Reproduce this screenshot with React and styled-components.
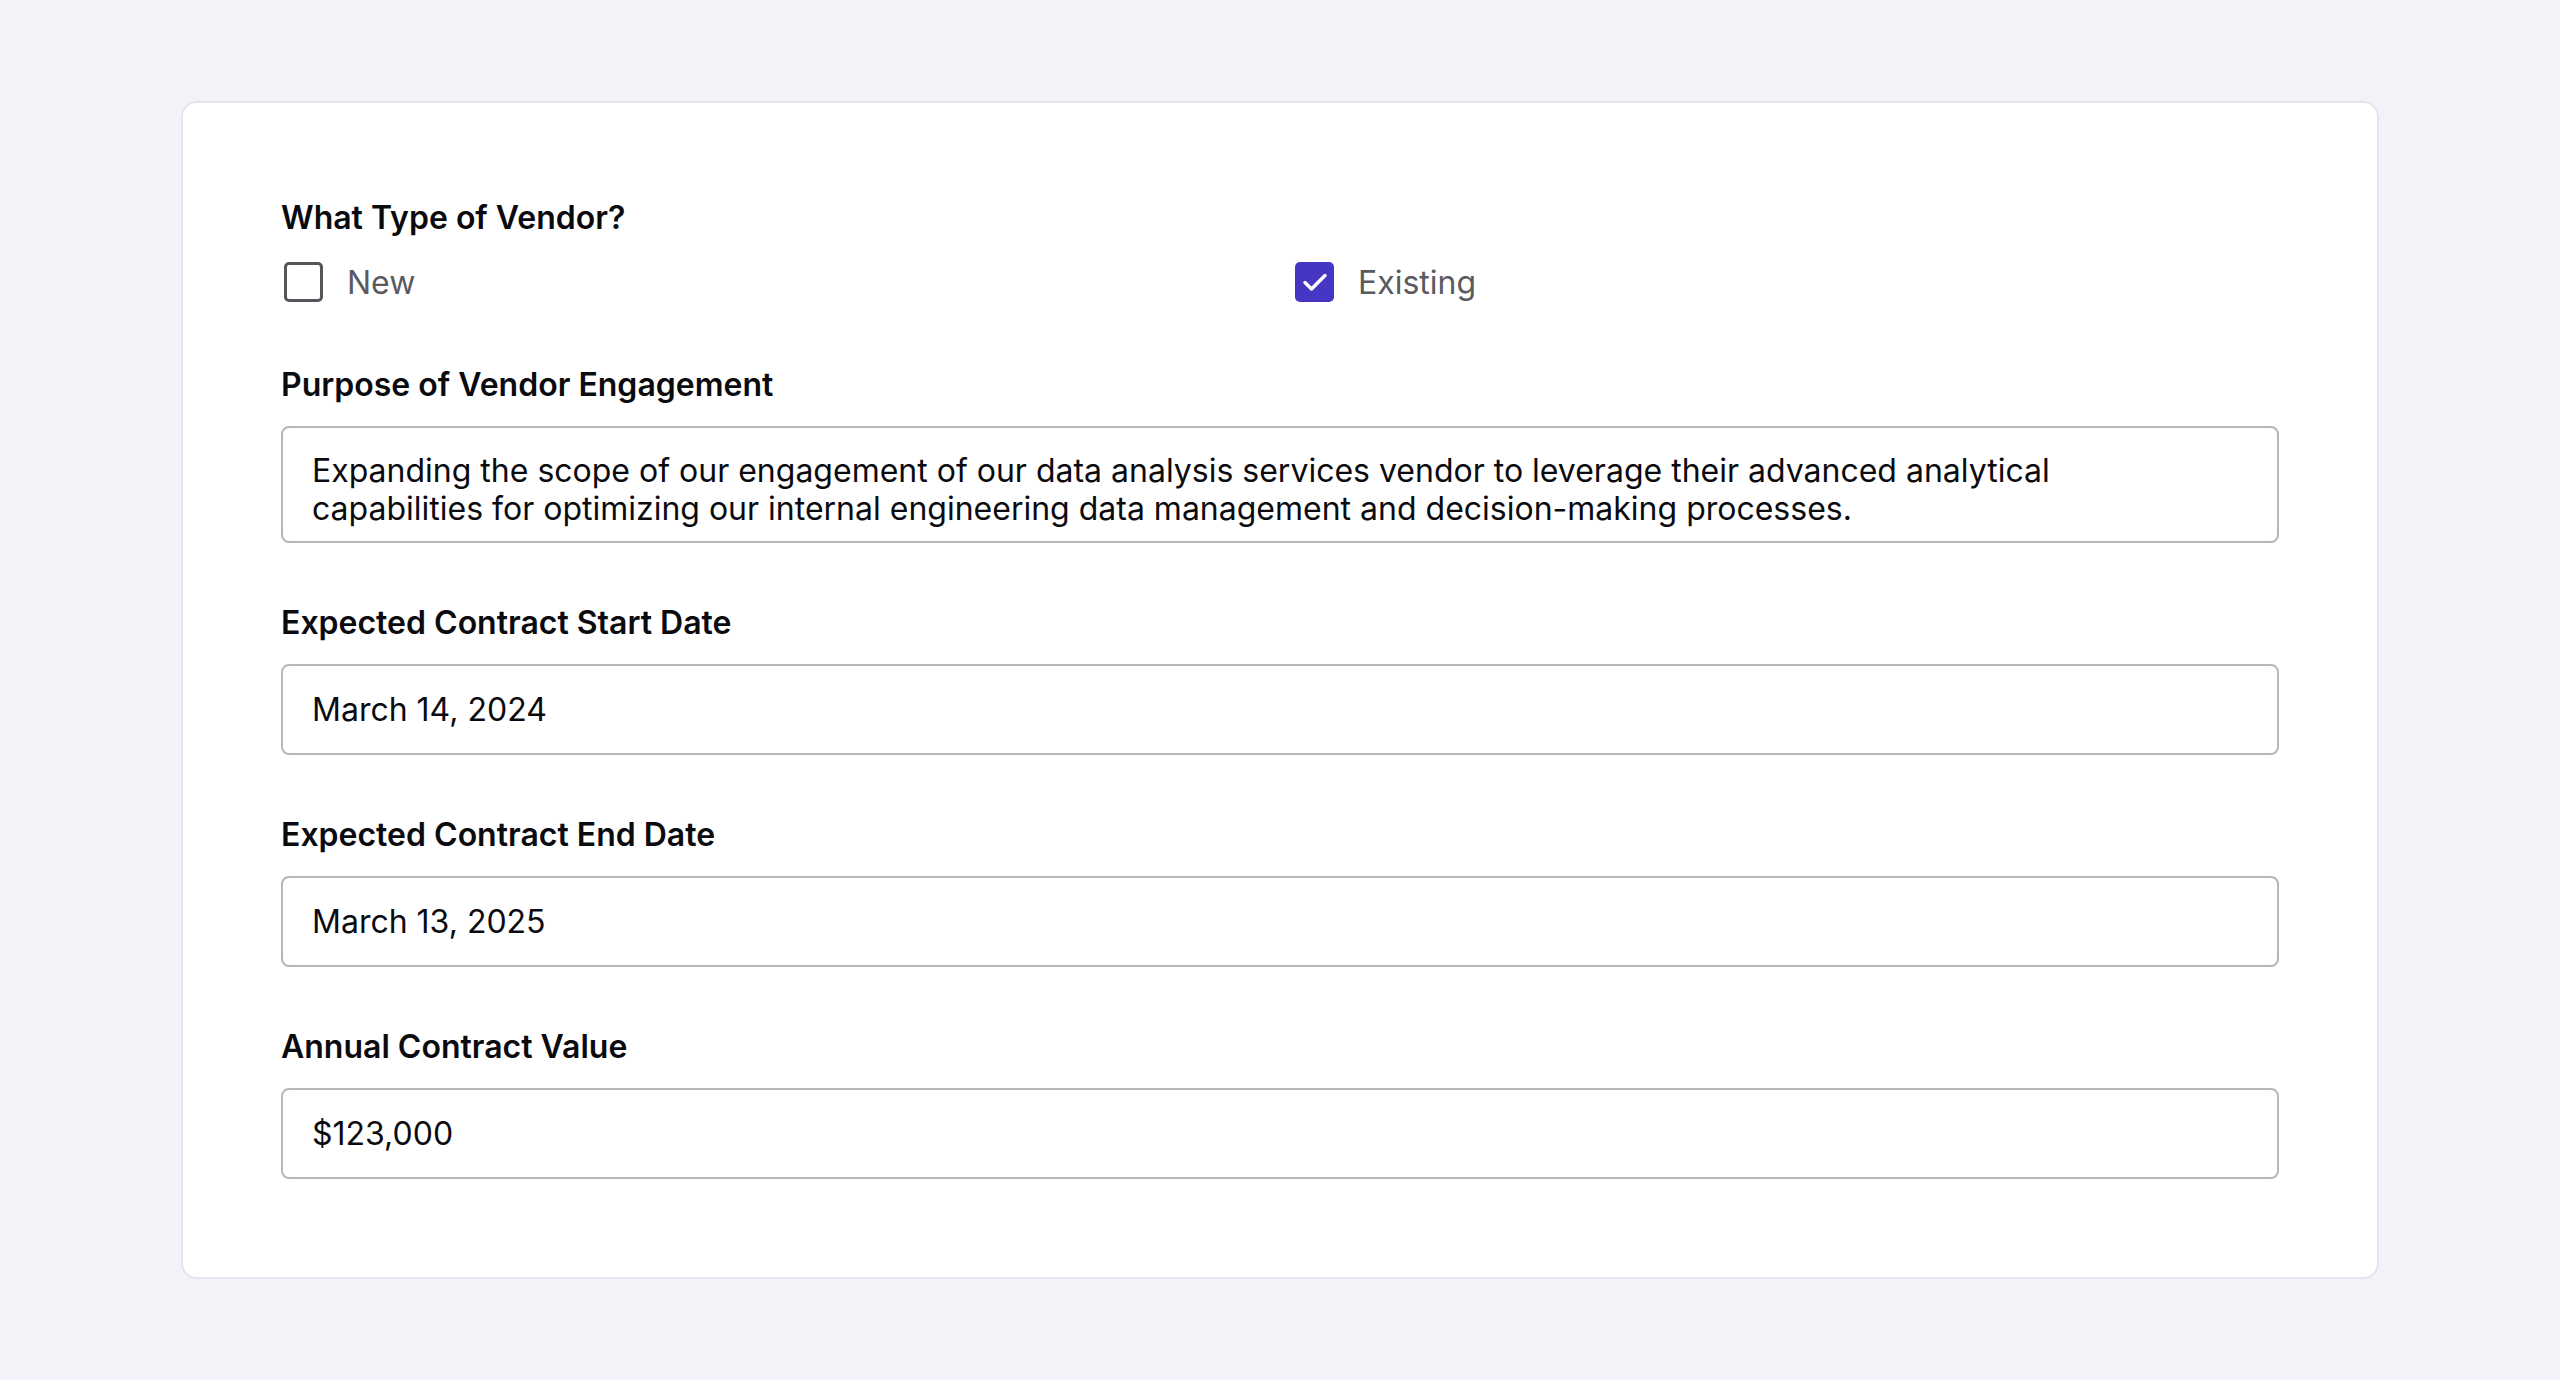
import React from "react";
import styled, { createGlobalStyle } from "styled-components";

// Vendor intake form

const GlobalStyle = createGlobalStyle`
  html, body {
    margin: 0;
    padding: 0;
    background: #f3f2f8;
  }
  body {
    font-family: Inter, "Noto Sans", "Liberation Sans", sans-serif;
    color: #0b0b0f;
  }
`;

const Page = styled.main`
  padding: 101px 181px 100px;
`;

const Card = styled.section`
  background: #ffffff;
  border: 2px solid #e6e5ec;
  border-radius: 16px;
  padding: 98px 98px 98px;
  display: flex;
  flex-direction: column;
  gap: 63px;
`;

const Field = styled.div`
  display: flex;
  flex-direction: column;
  gap: ${(p) => p.$gap || 24}px;
`;

const Label = styled.div`
  font-size: 32px;
  line-height: 34px;
  font-weight: 600;
  color: #0b0b0f;
`;

const Options = styled.div`
  display: grid;
  grid-template-columns: 1fr 1fr;
  column-gap: 24px;
  margin-bottom: 3px;
`;

const Option = styled.label`
  display: flex;
  align-items: center;
  gap: 24px;
  height: 40px;
  font-size: 32px;
  color: #5a5a60;
`;

const Box = styled.span`
  box-sizing: border-box;
  width: 39px;
  height: 40px;
  border-radius: 5px;
  display: flex;
  align-items: center;
  justify-content: center;
  margin-left: 3px;
  border: ${(p) => (p.$checked ? "none" : "3px solid #55555b")};
  background: ${(p) => (p.$checked ? "#4536c3" : "#ffffff")};
`;

const Input = styled.div`
  box-sizing: border-box;
  height: ${(p) => p.$height || 91}px;
  border: 2px solid #b7b7ba;
  border-radius: 8px;
  padding: ${(p) => (p.$multi ? "24px 29px 0" : "0 29px")};
  display: flex;
  align-items: ${(p) => (p.$multi ? "flex-start" : "center")};
  font-size: 32px;
  line-height: 38px;
  color: #0b0b0f;
`;

function Checkbox({ checked, children }) {
  return (
    <Option>
      <Box $checked={checked}>
        {checked && (
          <svg width="30" height="30" viewBox="0 0 30 30" fill="none">
            <path
              d="M5 15.5l6.5 6.5L25 8.5"
              stroke="#fff"
              strokeWidth="3.5"
              strokeLinecap="round"
              strokeLinejoin="round"
            />
          </svg>
        )}
      </Box>
      {children}
    </Option>
  );
}

const fields = [
  { label: "Expected Contract Start Date", value: "March 14, 2024" },
  { label: "Expected Contract End Date", value: "March 13, 2025" },
  { label: "Annual Contract Value", value: "$123,000" },
];

export default function App() {
  return (
    <>
      <GlobalStyle />
      <Page>
        <Card>
          <Field $gap={27}>
            <Label>What Type of Vendor?</Label>
            <Options>
              <Checkbox>New</Checkbox>
              <Checkbox checked>Existing</Checkbox>
            </Options>
          </Field>
          <Field>
            <Label>Purpose of Vendor Engagement</Label>
            <Input $multi $height={117}>
              <span>
                Expanding the scope of our engagement of our data analysis
                services vendor to leverage their advanced analytical
                <br />
                capabilities for optimizing our internal engineering data
                management and decision-making processes.
              </span>
            </Input>
          </Field>
          {fields.map((f) => (
            <Field key={f.label}>
              <Label>{f.label}</Label>
              <Input>{f.value}</Input>
            </Field>
          ))}
        </Card>
      </Page>
    </>
  );
}
